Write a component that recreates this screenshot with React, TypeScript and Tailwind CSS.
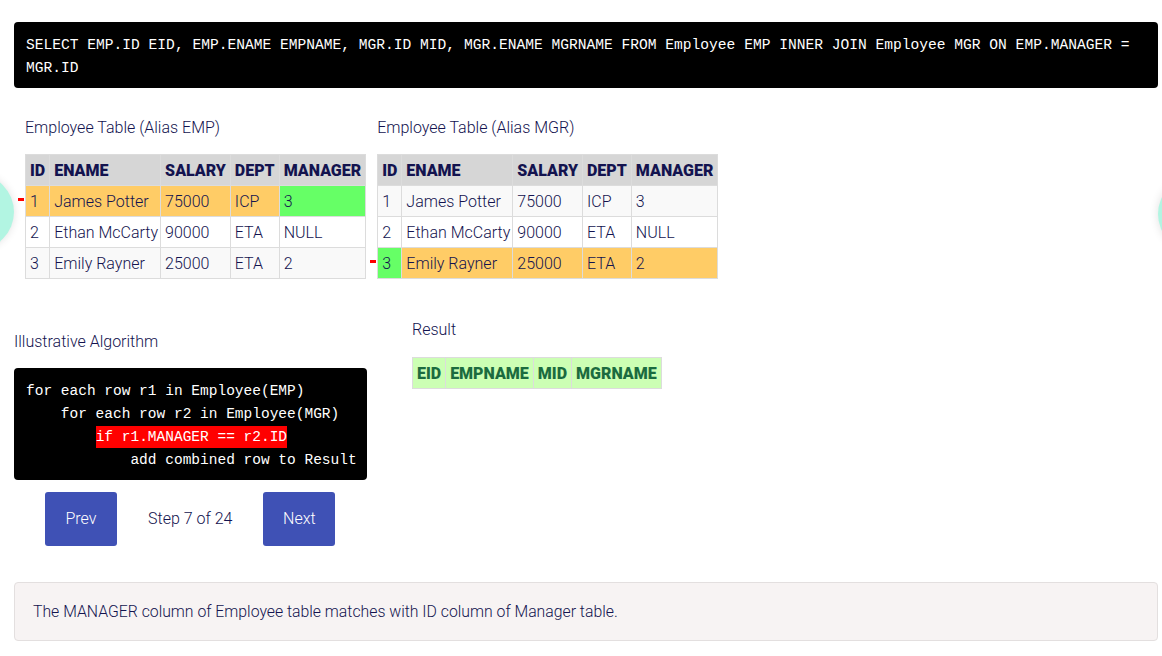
const NAVY = "text-[#13134f]";

type Row = { id: string; ename: string; salary: string; dept: string; manager: string };

const ROWS: Row[] = [
  { id: "1", ename: "James Potter", salary: "75000", dept: "ICP", manager: "3" },
  { id: "2", ename: "Ethan McCarty", salary: "90000", dept: "ETA", manager: "NULL" },
  { id: "3", ename: "Emily Rayner", salary: "25000", dept: "ETA", manager: "2" },
];

const HEADERS = ["ID", "ENAME", "SALARY", "DEPT", "MANAGER"];

function EmpTable({
  title,
  activeRow,
  greenCol,
}: {
  title: string;
  activeRow: number;
  greenCol: keyof Row;
}) {
  const cols: (keyof Row)[] = ["id", "ename", "salary", "dept", "manager"];
  return (
    <div>
      <p className={`text-[16px] leading-[19px] font-light ${NAVY}`}>{title}</p>
      <div className="relative mt-[17px]">
        {/* red pointer at active row */}
        <span
          className="absolute left-[-7px] h-[3px] w-[6px] bg-[#ff0000]"
          style={{ top: 44 + activeRow * 31 }}
        />
        <table className={`border-collapse text-[16px] leading-[19px] ${NAVY}`}>
          <thead>
            <tr className="bg-[#d6d6d6]">
              {HEADERS.map((h) => (
                <th key={h} className="border border-[#dcdcdc] px-[4px] py-[5.5px] text-left font-black">
                  {h}
                </th>
              ))}
            </tr>
          </thead>
          <tbody className="font-light">
            {ROWS.map((r, i) => {
              const active = i === activeRow;
              const stripe = i % 2 === 0 ? "bg-[#f9f9f9]" : "bg-white";
              return (
                <tr key={r.id} className={active ? "bg-[#ffcc66]" : stripe}>
                  {cols.map((c) => (
                    <td
                      key={c}
                      className={`border border-[#dcdcdc] py-[5.5px] ${c === "ename" ? "pl-[4px] pr-[2px]" : "px-[4px]"} ${
                        active && c === greenCol ? "bg-[#66ff66]" : ""
                      }`}
                    >
                      {r[c]}
                    </td>
                  ))}
                </tr>
              );
            })}
          </tbody>
        </table>
      </div>
    </div>
  );
}

export default function App() {
  const mono = "font-['Liberation_Mono','DejaVu_Sans_Mono',monospace]";
  return (
    <div className="relative min-h-[656px] overflow-hidden bg-white pl-[14px] pr-[4px] pt-[22px] font-['Roboto','Liberation_Sans',sans-serif]">
      {/* floating teal circles at the edges */}
      <div className="absolute left-[-62px] top-[174px] h-[76px] w-[76px] rounded-full bg-[#b2f5e2] shadow-[0_0_8px_rgba(0,0,0,0.12)]" />
      <div className="absolute right-[-72px] top-[176px] h-[76px] w-[76px] rounded-full bg-[#b2f5e2] shadow-[0_0_10px_rgba(0,0,0,0.12)]" />

      <div className={`rounded-[4px] bg-black px-[12px] pb-[8px] pt-[12px] text-[14.6px] leading-[23px] text-white ${mono}`}>
        SELECT EMP.ID EID, EMP.ENAME EMPNAME, MGR.ID MID, MGR.ENAME MGRNAME FROM Employee EMP INNER JOIN Employee MGR ON EMP.MANAGER = MGR.ID
      </div>

      <div className="mt-[30px] flex gap-[11px] pl-[11px]">
        <EmpTable title="Employee Table (Alias EMP)" activeRow={0} greenCol="manager" />
        <EmpTable title="Employee Table (Alias MGR)" activeRow={2} greenCol="id" />
      </div>

      <div className="mt-[41px] flex gap-[45px]">
        <div className="w-[353px] pt-[12px]">
          <p className={`text-[16px] leading-[19px] font-light ${NAVY}`}>Illustrative Algorithm</p>
          <div className={`mt-[17px] rounded-[4px] bg-black px-[12px] pb-[8px] pt-[12px] text-[14.5px] leading-[23px] text-white ${mono}`}>
            <div className="whitespace-pre">for each row r1 in Employee(EMP)</div>
            <div className="whitespace-pre">{"    for each row r2 in Employee(MGR)"}</div>
            <div className="whitespace-pre">
              {"        "}
              <span className="inline-block bg-[#ff0000] leading-[22px]">if r1.MANAGER == r2.ID</span>
            </div>
            <div className="whitespace-pre">{"            add combined row to Result"}</div>
          </div>
          <div className="mt-[12px] flex items-center gap-[31px] pl-[31px]">
            <button className="h-[54px] w-[72px] rounded-[3px] bg-[#3f51b5] text-[16px] font-light text-white">Prev</button>
            <span className={`text-[16px] font-light ${NAVY}`}>Step 7 of 24</span>
            <button className="h-[54px] w-[72px] rounded-[3px] bg-[#3f51b5] text-[16px] font-light text-white">Next</button>
          </div>
        </div>

        <div>
          <p className={`text-[16px] leading-[19px] font-light ${NAVY}`}>Result</p>
          <table className="mt-[18px] border-collapse text-[16px] leading-[19px] text-[#1b6b3f]">
            <thead>
              <tr className="bg-[#ccffb4]">
                {["EID", "EMPNAME", "MID", "MGRNAME"].map((h) => (
                  <th key={h} className="border border-[#dcdcdc] px-[4px] py-[5.5px] text-left font-black">
                    {h}
                  </th>
                ))}
              </tr>
            </thead>
          </table>
        </div>
      </div>

      <div className="mt-[36px] rounded-[4px] border border-[#e3dfdf] bg-[#f7f3f3] px-[18px] py-[19px]">
        <p className={`text-[15.8px] leading-[19px] font-light ${NAVY}`}>
          The MANAGER column of Employee table matches with ID column of Manager table.
        </p>
      </div>
    </div>
  );
}
